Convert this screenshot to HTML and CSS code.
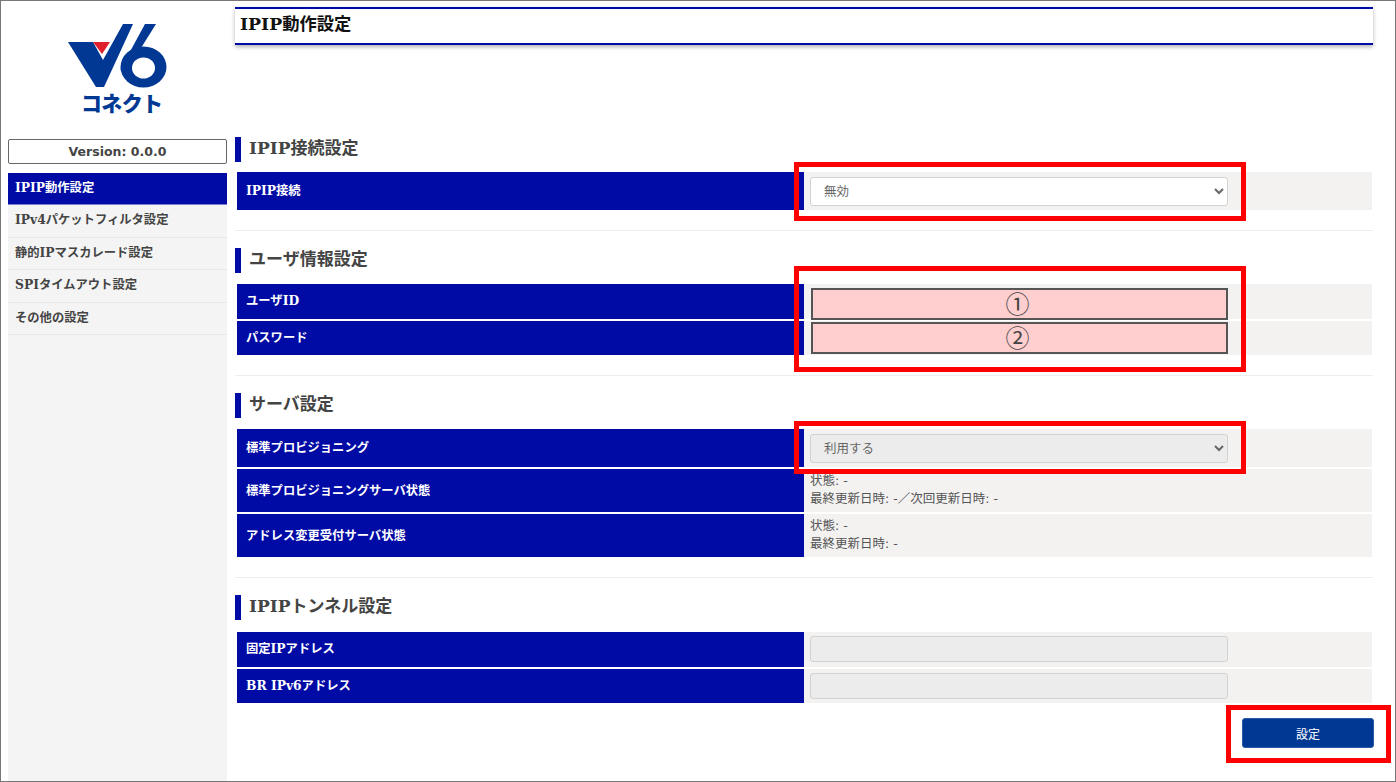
FILE: index.html
```html
<!DOCTYPE html>
<html lang="ja">
<head>
<meta charset="utf-8">
<title>IPIP動作設定</title>
<link rel="stylesheet" href="styles.css">
</head>
<body>
<div class="frame">
  <aside class="sidebar">
    <div class="logo">
      <svg class="logo-svg" viewBox="8 1 219 137" width="219" height="137" aria-label="V6コネクト">
        <polygon class="logo-blue" points="68,42 93,42 103,60 123,24 133,24 104,87 96,87"/>
        <polygon class="logo-red" points="93,42 110,42 102,54"/>
        <polygon class="logo-blue" points="145,24 156,24 136,56 120,70"/>
        <ellipse class="logo-blue" cx="143.5" cy="67" rx="23" ry="20.5"/>
        <ellipse class="logo-hole" cx="143.5" cy="68" rx="11.5" ry="10.5"/>
        <text class="logo-text" x="81" y="111" textLength="82">コネクト</text>
      </svg>
    </div>
    <div class="version">Version: 0.0.0</div>
    <nav class="menu">
      <a class="menu-item is-active">IPIP動作設定</a>
      <a class="menu-item">IPv4パケットフィルタ設定</a>
      <a class="menu-item">静的IPマスカレード設定</a>
      <a class="menu-item">SPIタイムアウト設定</a>
      <a class="menu-item">その他の設定</a>
    </nav>
  </aside>

  <main class="main">
    <h1 class="page-title">IPIP動作設定</h1>

    <section class="section section-first">
      <h2 class="section-title">IPIP接続設定</h2>
      <div class="rows">
        <div class="row row-38">
          <div class="label">IPIP接続</div>
          <div class="value">
            <select class="control control-select"><option>無効</option></select>
            <div class="mark mark-1"></div>
          </div>
        </div>
      </div>
    </section>

    <section class="section">
      <h2 class="section-title">ユーザ情報設定</h2>
      <div class="rows">
        <div class="row row-short">
          <div class="label">ユーザID</div>
          <div class="value">
            <div class="mask mask-1">①</div>
            <div class="mark mark-2"></div>
          </div>
        </div>
        <div class="row row-short">
          <div class="label">パスワード</div>
          <div class="value">
            <div class="mask mask-2">②</div>
          </div>
        </div>
      </div>
    </section>

    <section class="section">
      <h2 class="section-title">サーバ設定</h2>
      <div class="rows">
        <div class="row row-38">
          <div class="label">標準プロビジョニング</div>
          <div class="value">
            <select class="control control-select is-disabled"><option>利用する</option></select>
            <div class="mark mark-3"></div>
          </div>
        </div>
        <div class="row row-43">
          <div class="label">標準プロビジョニングサーバ状態</div>
          <div class="value value-text">
            <div>状態: -</div>
            <div>最終更新日時: -／次回更新日時: -</div>
          </div>
        </div>
        <div class="row row-43">
          <div class="label">アドレス変更受付サーバ状態</div>
          <div class="value value-text">
            <div>状態: -</div>
            <div>最終更新日時: -</div>
          </div>
        </div>
      </div>
    </section>

    <section class="section section-last">
      <h2 class="section-title">IPIPトンネル設定</h2>
      <div class="rows">
        <div class="row row-short">
          <div class="label">固定IPアドレス</div>
          <div class="value"><input class="control control-input" disabled></div>
        </div>
        <div class="row row-short">
          <div class="label">BR IPv6アドレス</div>
          <div class="value"><input class="control control-input" disabled></div>
        </div>
      </div>
    </section>

    <div class="actions">
      <button class="submit" type="button">設定</button>
      <div class="mark mark-4"></div>
    </div>
  </main>
</div>
</body>
</html>
```

FILE: styles.css
```css
* { box-sizing: border-box; }

html, body {
  margin: 0;
  height: 100%;
}

body {
  font-family: "DejaVu Serif", "Noto Sans CJK JP", sans-serif;
  color: #444;
  background: #fff;
}

.frame {
  display: flex;
  height: 782px;
  border: 1px solid #777;
  overflow: hidden;
}

.sidebar {
  width: 219px;
  margin-left: 7px;
  display: flex;
  flex-direction: column;
  flex: none;
}

.logo { height: 138px; }
.logo-svg { display: block; }
.logo-blue { fill: #003893; }
.logo-red { fill: #e0202a; }
.logo-hole { fill: #fff; }
.logo-text {
  font-family: "Noto Sans CJK JP", sans-serif;
  font-weight: 900;
  font-size: 21px;
  fill: #003893;
}

.version {
  height: 25px;
  border: 1px solid #666;
  border-radius: 2px;
  font-family: "DejaVu Sans", sans-serif;
  font-size: 12.5px;
  font-weight: bold;
  line-height: 23px;
  text-align: center;
  color: #444;
}

.menu {
  flex: 1;
  margin-top: 9px;
  background: #f4f4f4;
}

.menu-item {
  display: block;
  height: 32.4px;
  padding-left: 7px;
  border-bottom: 1px solid #e6e6e6;
  font-size: 12.3px;
  font-weight: bold;
  line-height: 30px;
  color: #444;
}

.menu-item.is-active {
  background: #000aa5;
  border-bottom: 1px solid #7c80d0;
  color: #fff;
}

.main {
  width: 1138px;
  margin-left: 8px;
  flex: none;
}

.page-title {
  margin: 6px 0 0;
  height: 38px;
  padding-left: 5px;
  border-top: 2px solid #000aa5;
  border-bottom: 2px solid #000aa5;
  box-shadow: 0 2px 4px rgba(0, 0, 0, 0.3);
  font-size: 17.3px;
  font-weight: bold;
  line-height: 31px;
  color: #111;
}

.section {
  padding-bottom: 20px;
  margin-bottom: 17px;
  border-bottom: 1px solid #eee;
}

.section-first { margin-top: 92px; }
.section-first .section-title { margin-bottom: 10px; }

.section-last {
  padding-bottom: 0;
  margin-bottom: 0;
  border-bottom: 0;
}

.section-last .section-title { margin-bottom: 12px; }

.section-title {
  margin: 0 0 11px;
  height: 25px;
  padding-left: 8px;
  border-left: 6px solid #000aa5;
  font-size: 17px;
  font-weight: bold;
  line-height: 23px;
  color: #444;
}

.rows {
  display: flex;
  flex-direction: column;
  gap: 2px;
  margin: 0 1px 0 2px;
}

.row { display: flex; }
.row-short { height: 34.5px; }
.row-38 { height: 38px; }
.row-43 { height: 43px; }

.label {
  width: 567px;
  flex: none;
  display: flex;
  align-items: center;
  padding: 0 0 2px 9px;
  background: #000aa5;
  color: #fff;
  font-size: 12.3px;
  font-weight: bold;
}

.value {
  position: relative;
  flex: 1;
  display: flex;
  align-items: center;
  padding-left: 6px;
  background: #f3f2f1;
}

.value-text {
  display: block;
  padding-top: 2.5px;
  font-family: "DejaVu Sans", "Noto Sans CJK JP", sans-serif;
  font-size: 12.5px;
  line-height: 18px;
  color: #555;
}

.control {
  display: block;
  width: 418px;
  border: 1px solid #d2d2d2;
  border-radius: 3px;
  font-family: "DejaVu Sans", "Noto Sans CJK JP", sans-serif;
  font-size: 12.5px;
  color: #666;
  background-color: #fff;
}

.control-select {
  height: 29px;
  padding-left: 9px;
}

.control-input {
  height: 26px;
  background-color: #ececec;
}

.control-select.is-disabled { background-color: #ececec; }

.mask {
  position: absolute;
  left: 7px;
  top: 4px;
  width: 417px;
  height: 32px;
  padding-right: 4px;
  border: 2px solid #555;
  background: #ffcece;
  font-family: "Noto Sans CJK JP", sans-serif;
  font-size: 24px;
  line-height: 26px;
  text-align: center;
  color: #444;
}

.mask-2 { top: 1.5px; }

.mark {
  position: absolute;
  border: 5px solid #ff0000;
  pointer-events: none;
  z-index: 2;
}

.mark-1 { left: -10px; top: -10px; width: 452px; height: 59px; }
.mark-2 { left: -10px; top: -18px; width: 452px; height: 106px; }
.mark-3 { left: -10px; top: -8px; width: 452px; height: 53px; }
.mark-4 { left: 991px; top: -13px; width: 165px; height: 58px; }

.actions {
  position: relative;
  display: flex;
  justify-content: flex-end;
  margin-top: 15px;
}

.submit {
  width: 132px;
  height: 30px;
  margin-right: -1px;
  border: 1px solid #2a5aa5;
  border-radius: 3px;
  background: #003893;
  color: #fff;
  font-family: "DejaVu Sans", "Noto Sans CJK JP", sans-serif;
  font-size: 12px;
}
```
